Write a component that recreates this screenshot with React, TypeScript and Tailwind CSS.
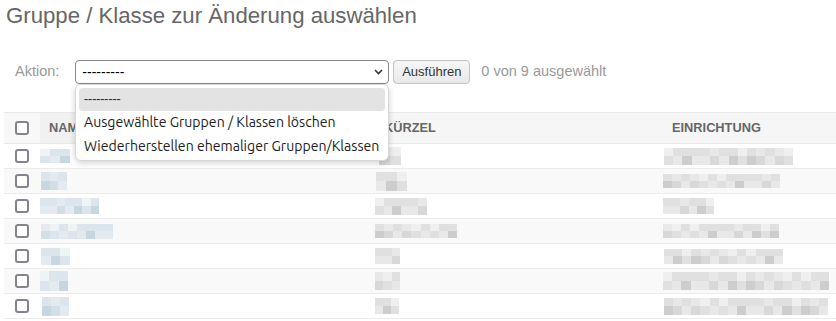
import React from "react";

const BLUE = ["bg-[#eef3f6]", "bg-[#e4ebf0]", "bg-[#dbe5eb]", "bg-[#d2dfe6]", "bg-[#c6d7e0]"];
const GRAY = ["bg-[#efefef]", "bg-[#e8e8e8]", "bg-[#e0e0e0]", "bg-[#d8d8d8]", "bg-[#cdcdcd]"];

type B = [number, number, number];
const rows: { n: B; k: B; e: B }[] = [
  { n: [0, 30, 14], k: [4, 22, 18], e: [1, 129, 17] },
  { n: [1, 26, 18], k: [1, 31, 19], e: [0, 117, 14] },
  { n: [0, 59, 16], k: [0, 52, 17], e: [0, 51, 16] },
  { n: [1, 72, 15], k: [0, 82, 14], e: [0, 116, 14] },
  { n: [1, 29, 17], k: [0, 25, 16], e: [1, 119, 15] },
  { n: [0, 28, 20], k: [0, 25, 18], e: [0, 166, 18] },
  { n: [2, 27, 19], k: [0, 24, 16], e: [1, 164, 17] },
];

function Blob({ b, seed, palette }: { b: B; seed: number; palette: string[] }) {
  const [off, w, h] = b;
  const cols = Math.max(2, Math.round(w / 9));
  const lines = [0, 1];
  return (
    <div className="flex flex-col" style={{ width: w, height: h, marginLeft: off }}>
      {lines.map((r) => (
        <div key={r} className="flex flex-1">
          {Array.from({ length: cols }).map((_, c) => {
            let idx = (c * 3 + r * 2 + seed * 7 + ((c * c) % 3)) % 5;
            if (r === 0) idx = Math.min(idx, 2);
            else idx = Math.max(idx, 1);
            return <div key={c} className={`flex-1 ${palette[idx]}`} />;
          })}
        </div>
      ))}
    </div>
  );
}

function Check() {
  return <div className="w-[14px] h-[14px] border-2 border-[#858391] rounded-[3px] bg-white" />;
}

export default function App() {
  return (
    <div className="relative w-[836px] h-[321px] overflow-hidden bg-white font-['Liberation_Sans',Arial,sans-serif]">
      <h1 className="pl-[6px] pt-[3px] text-[22.2px] leading-[26px] font-normal text-[#666]">
        Gruppe / Klasse zur Änderung auswählen
      </h1>

      <div className="mt-[31px] flex items-center h-[24px] pl-[15px]">
        <span className="text-[14.5px] text-[#999]">Aktion:</span>
        <div className="ml-[16px] w-[314px] h-[24px] border border-[#8a8a8a] rounded-[4px] flex items-center justify-between pl-[6px] pr-[5px] bg-white">
          <span className="text-[14px] text-black leading-none">---------</span>
          <svg width="9" height="6" viewBox="0 0 9 6">
            <polyline points="1,1 4.5,4.5 8,1" fill="none" stroke="#333" strokeWidth="1.6" />
          </svg>
        </div>
        <button className="ml-[4px] w-[77px] h-[24px] rounded-[4px] border border-[#c4c4c4] bg-gradient-to-b from-[#f7f7f7] to-[#e9e9e9] text-[13px] text-[#333]">
          Ausführen
        </button>
        <span className="ml-[11px] text-[14.5px] text-[#999]">0 von 9 ausgewählt</span>
      </div>

      <div className="mt-[28px] ml-[4px]">
        <div className="grid grid-cols-[36px_335px_288px_1fr] h-[32px] border-t border-b border-[#eaeaea] text-[12.8px] font-bold text-[#666] uppercase">
          <div className="bg-[#f8f8f8] flex items-center pl-[11px]">
            <Check />
          </div>
          <div className="bg-[#f1f1f1] flex items-center pl-[9px]">Name</div>
          <div className="bg-[#f6f6f6] flex items-center pl-[9px]">Kürzel</div>
          <div className="bg-[#f6f6f6] flex items-center pl-[9px]">Einrichtung</div>
        </div>
        {rows.map((r, i) => (
          <div
            key={i}
            className={`grid grid-cols-[36px_335px_288px_1fr] h-[25px] border-b border-[#ececec] ${
              i % 2 === 1 ? "bg-[#f9f9f9]" : "bg-white"
            }`}
          >
            <div className="flex items-center pl-[11px]">
              <Check />
            </div>
            <div className="flex items-center">
              <Blob b={r.n} seed={i} palette={BLUE} />
            </div>
            <div className="flex items-center">
              <Blob b={r.k} seed={i + 3} palette={GRAY} />
            </div>
            <div className="flex items-center">
              <Blob b={r.e} seed={i + 5} palette={GRAY} />
            </div>
          </div>
        ))}
      </div>

      <div className="absolute left-[75px] top-[84px] w-[314px] h-[77px] bg-white rounded-[6px] border border-[#d8d8d8] shadow-[0_2px_6px_rgba(0,0,0,0.18)] p-[3px] font-['Ubuntu','Lato',sans-serif] text-[14.1px] whitespace-nowrap">
        <div className="h-[23px] rounded-[4px] bg-[#e3e3e3] flex items-center pl-[5px] text-[#333]">---------</div>
        <div className="h-[24px] flex items-center pl-[5px] text-[#222]">Ausgewählte Gruppen / Klassen löschen</div>
        <div className="h-[24px] flex items-center pl-[5px] text-[#222]">Wiederherstellen ehemaliger Gruppen/Klassen</div>
      </div>
    </div>
  );
}
